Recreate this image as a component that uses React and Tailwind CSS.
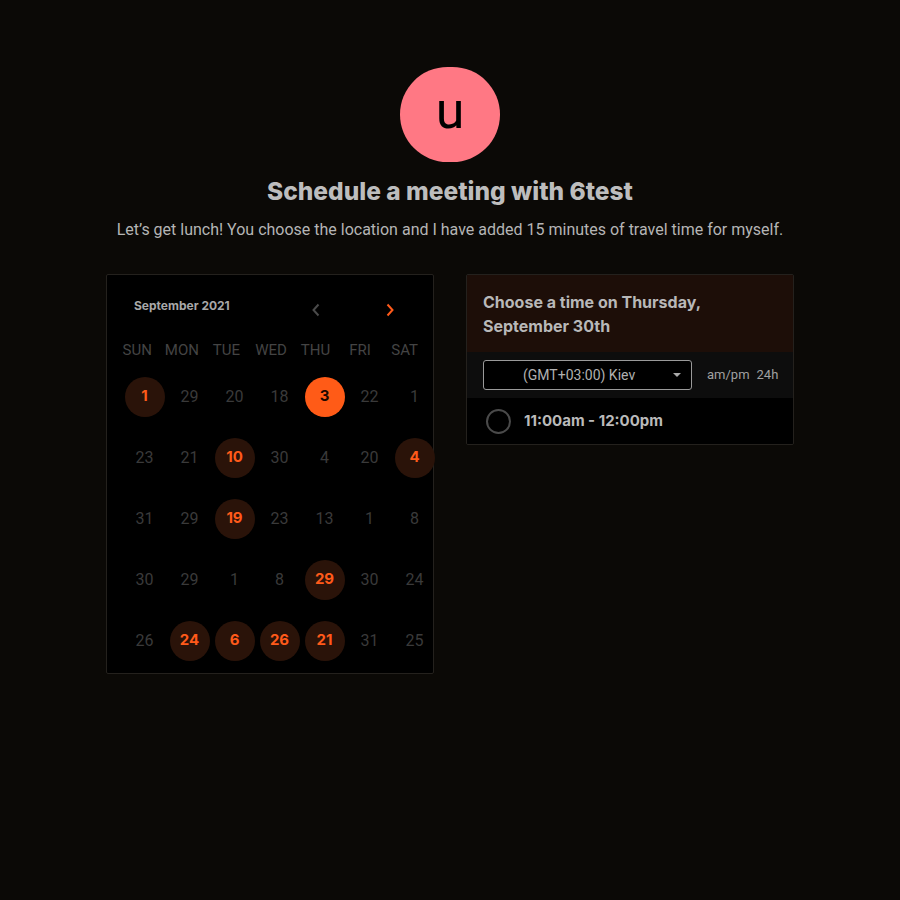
import React from "react";

const rows = [
  [["1", "a"], ["29"], ["20"], ["18"], ["3", "s"], ["22"], ["1"]],
  [["23"], ["21"], ["10", "a"], ["30"], ["4"], ["20"], ["4", "a"]],
  [["31"], ["29"], ["19", "a"], ["23"], ["13"], ["1"], ["8"]],
  [["30"], ["29"], ["1"], ["8"], ["29", "a"], ["30"], ["24"]],
  [["26"], ["24", "a"], ["6", "a"], ["26", "a"], ["21", "a"], ["31"], ["25"]],
];

const days = ["SUN", "MON", "TUE", "WED", "THU", "FRI", "SAT"];

function Day({ v, t }) {
  if (t === "s") {
    return (
      <div className="w-[40px] h-[40px] rounded-full bg-[#ff5b17] flex items-center justify-center text-[15px] font-bold text-[#1a0800] font-['Inter']">
        {v}
      </div>
    );
  }
  if (t === "a") {
    return (
      <div className="w-[40px] h-[40px] rounded-full bg-[#2a1309] flex items-center justify-center text-[15px] font-bold text-[#ff5a1a] font-['Inter']">
        {v}
      </div>
    );
  }
  return <div className="text-[16px] text-[#3a3a3a]">{v}</div>;
}

export default function App() {
  return (
    <div className="min-h-[900px] w-full bg-[#0b0906] font-['Roboto',sans-serif] flex flex-col items-center pt-[67px]">
      <div className="w-[100px] h-[95px] rounded-full bg-[#ff7884] flex items-center justify-center">
        <span className="text-[52px] leading-none text-black -mt-[8px]">u</span>
      </div>
      <h1 className="mt-[14px] text-[24.5px] leading-[30px] font-extrabold text-[#bdbdbd] font-['Inter',sans-serif]">
        Schedule a meeting with 6test
      </h1>
      <p className="mt-[14px] text-[16px] leading-[20px] text-[#b5b5b5]">
        Let’s get lunch! You choose the location and I have added 15 minutes of travel time for myself.
      </p>

      <div className="mt-[34px] flex gap-[32px] items-start">
        {/* Calendar */}
        <div className="w-[328px] h-[400px] bg-black border border-[#24211d] rounded-[2px]">
          <div className="h-[62px] flex items-center pl-[27px]">
            <div className="w-[170px] text-[12px] font-bold text-[#a8a8a8] font-['Inter',sans-serif]">
              September 2021
            </div>
            <div className="w-[24px] flex justify-center mt-[7px]">
              <svg width="10" height="14" viewBox="0 0 10 14">
                <path d="M7.5 1.5 L2.5 7 L7.5 12.5" fill="none" stroke="#4a4a4a" strokeWidth="2" />
              </svg>
            </div>
            <div className="w-[50px]" />
            <div className="w-[24px] flex justify-center mt-[7px]">
              <svg width="10" height="14" viewBox="0 0 10 14">
                <path d="M2.5 1.5 L7.5 7 L2.5 12.5" fill="none" stroke="#ff5a1a" strokeWidth="2" />
              </svg>
            </div>
          </div>
          <div className="mt-[2px] ml-[8px] w-[312px] grid grid-cols-7 h-[20px] items-center">
            {days.map((d) => (
              <div key={d} className="text-center text-[15px] text-[#444444]">
                {d}
              </div>
            ))}
          </div>
          <div className="mt-[7px] ml-[15px] w-[315px]">
            {rows.map((r, i) => (
              <div key={i} className="grid grid-cols-7 h-[61px] items-center">
                {r.map(([v, t], j) => (
                  <div key={j} className="flex justify-center">
                    <Day v={v} t={t} />
                  </div>
                ))}
              </div>
            ))}
          </div>
        </div>

        {/* Time picker */}
        <div className="w-[328px] border border-[#24211d] rounded-[2px] overflow-hidden">
          <div className="bg-[#1d0e08] px-[16px] pt-[15px] pb-[14px] text-[16px] leading-[24px] font-bold text-[#b8b8b8] font-['Inter',sans-serif]">
            Choose a time on Thursday,
            <br />
            September 30th
          </div>
          <div className="bg-[#0d0d0d] h-[46px] flex items-center pl-[16px]">
            <div className="w-[209px] h-[30px] border border-[#9a9a9a] rounded-[3px] bg-black flex items-center relative">
              <span className="ml-[39px] text-[14px] text-[#b0b0b0]">(GMT+03:00) Kiev</span>
              <svg className="absolute right-[10px] top-[12px]" width="8" height="5" viewBox="0 0 8 5">
                <path d="M0 0 L8 0 L4 4 Z" fill="#aaaaaa" />
              </svg>
            </div>
            <div className="ml-[15px] text-[13px] text-[#a0a0a0] flex gap-[7px]">
              <span>am/pm</span>
              <span>24h</span>
            </div>
          </div>
          <div className="bg-black h-[46px] flex items-center pl-[19px]">
            <div className="w-[25px] h-[25px] rounded-full border-2 border-[#4a4a4a]" />
            <span className="ml-[13px] text-[15px] font-bold text-[#bababa] font-['Inter',sans-serif]">
              11:00am - 12:00pm
            </span>
          </div>
        </div>
      </div>
    </div>
  );
}
